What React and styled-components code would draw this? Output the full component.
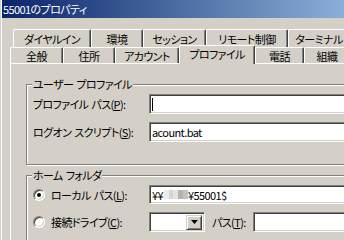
import React from "react";
import styled, { createGlobalStyle } from "styled-components";

const GlobalStyle = createGlobalStyle`
  html, body {
    margin: 0;
    padding: 0;
    background: #d4d0c8;
    overflow: hidden;
  }
  body {
    font-family: "Noto Sans CJK JP", "Liberation Sans", sans-serif;
    font-size: 11px;
    letter-spacing: -0.6px;
    font-feature-settings: "palt";
    color: #000;
  }
`;

const Window = styled.div`
  width: 420px;
  height: 240px;
  background: #d4d0c8;
  box-shadow: inset 1px 0 #d4d0c8, inset 2px 0 #fff;
  display: flex;
  flex-direction: column;
`;

const TitleBar = styled.div`
  height: 18px;
  margin-left: 2px;
  padding-left: 1px;
  display: flex;
  align-items: center;
  background: linear-gradient(90deg, #0a246a 0, #a6cef0 100%);
  color: #fff;
  line-height: 18px;
`;

const Body = styled.div`
  padding: 11px 0 0 10px;
  display: flex;
  flex-direction: column;
`;

const TabRow = styled.div`
  display: flex;
  align-items: flex-end;
  height: ${(p) => p.$h}px;
  padding-left: ${(p) => p.$indent}px;
`;

const Tab = styled.div`
  flex: none;
  box-sizing: border-box;
  width: ${(p) => p.$w}px;
  height: ${(p) => (p.$active ? p.$h + 3 : p.$h)}px;
  margin-bottom: ${(p) => (p.$active ? -1 : 0)}px;
  position: relative;
  z-index: ${(p) => (p.$active ? 2 : 1)};
  background: #d4d0c8;
  border-top: 1px solid #fff;
  border-left: 1px solid #fff;
  border-right: 1px solid #404040;
  box-shadow: inset -1px 0 #808080;
  border-radius: 2px 2px 0 0;
  display: flex;
  align-items: center;
  justify-content: center;
  padding-bottom: ${(p) => (p.$active ? 3 : 0)}px;
  line-height: 14px;
  white-space: nowrap;
`;

const Panel = styled.div`
  border-top: 1px solid #fff;
  border-left: 1px solid #fff;
  padding: 20px 0 0 15px;
  display: flex;
  flex-direction: column;
  gap: 10px;
`;

const GroupBox = styled.div`
  position: relative;
  border: 1px solid #808080;
  box-shadow: 1px 1px 0 #fff, inset 1px 1px 0 #fff;
  padding: ${(p) => p.$pad};
  display: flex;
  flex-direction: column;
  gap: ${(p) => p.$gap}px;
`;

const Legend = styled.span`
  position: absolute;
  top: -8px;
  left: 5px;
  padding: 0 1px;
  background: #d4d0c8;
  line-height: 14px;
  white-space: pre;
`;

const Row = styled.div`
  display: grid;
  grid-template-columns: 116px 1fr;
  align-items: center;
`;

const Label = styled.div`
  display: flex;
  align-items: center;
  gap: 6px;
  line-height: 14px;
  white-space: pre;
`;

const Field = styled.div`
  box-sizing: border-box;
  height: ${(p) => p.$h}px;
  width: ${(p) => (p.$w ? `${p.$w}px` : "auto")};
  background: #fff;
  border: 1px solid;
  border-color: #808080 #fff #fff #808080;
  box-shadow: inset 1px 1px #404040, inset -1px -1px #d4d0c8;
  padding-left: 2px;
  display: flex;
  align-items: center;
  line-height: 14px;
  white-space: nowrap;
`;

const Caret = styled.span`
  width: 1px;
  height: 13px;
  background: #000;
`;

const Mosaic = styled.span`
  display: inline-block;
  width: 24px;
  height: 9px;
  margin: 0 0 0 1px;
  background: linear-gradient(
    90deg,
    #ececec 0 5px,
    #d6d6d6 5px 9px,
    #e4e4e4 9px 14px,
    #b4b4b4 14px 19px,
    #c2c2c2 19px 24px
  );
`;

const Inline = styled.div`
  display: flex;
  align-items: center;
  gap: 7px;
`;

const Combo = styled(Field)`
  justify-content: flex-end;
  padding: 2px;
  flex: none;
`;

const DropButton = styled.span`
  box-sizing: border-box;
  width: 16px;
  height: 15px;
  background: #d4d0c8;
  border: 1px solid;
  border-color: #d4d0c8 #404040 #404040 #d4d0c8;
  box-shadow: inset 1px 1px #fff, inset -1px -1px #808080;
  display: flex;
  align-items: center;
  justify-content: center;
`;

const Radio = styled.span`
  box-sizing: border-box;
  width: 12px;
  height: 12px;
  border-radius: 50%;
  background: #fff;
  border: 1px solid;
  border-color: #808080 #fff #fff #808080;
  box-shadow: inset 1px 1px #404040, inset -1px -1px #d4d0c8;
  display: flex;
  align-items: center;
  justify-content: center;
  flex: none;

  &::after {
    content: "";
    width: 4px;
    height: 4px;
    border-radius: 50%;
    background: ${(p) => (p.$checked ? "#000" : "transparent")};
  }
`;

const backTabs = [
  ["ダイヤルイン", 78],
  ["環境", 52],
  ["セッション", 63],
  ["リモート制御", 82],
  ["ターミナル", 62],
];

const frontTabs = [
  ["全般", 53],
  ["住所", 52],
  ["アカウント", 64],
  ["プロファイル", 76, true],
  ["電話", 49],
  ["組織", 46],
];

export default function App() {
  return (
    <>
      <GlobalStyle />
      <Window>
        <TitleBar>55001のプロパティ</TitleBar>
        <Body>
          <TabRow $h={18} $indent={3}>
            {backTabs.map(([t, w]) => (
              <Tab key={t} $w={w} $h={18}>
                {t}
              </Tab>
            ))}
          </TabRow>
          <TabRow $h={16} $indent={0}>
            {frontTabs.map(([t, w, active]) => (
              <Tab key={t} $w={w} $h={16} $active={active}>
                {t}
              </Tab>
            ))}
          </TabRow>
          <Panel>
            <GroupBox $pad="9px 0 22px 6px" $gap={8}>
              <Legend>ユーザー{"\u2004"}プロファイル</Legend>
              <Row>
                <Label>
                  <span>
                    プロファイル{"\u2004"}パス(<u>P</u>):
                  </span>
                </Label>
                <Field $h={20}>
                  <Caret />
                </Field>
              </Row>
              <Row>
                <Label>
                  <span>
                    ログオン{"\u2004"}スクリプト(<u>S</u>):
                  </span>
                </Label>
                <Field $h={20}>acount.bat</Field>
              </Row>
            </GroupBox>
            <GroupBox $pad="9px 0 9px 6px" $gap={8}>
              <Legend>ホーム{"\u2004"}フォルダ</Legend>
              <Row>
                <Label>
                  <Radio $checked />
                  <span>
                    ローカル{"\u2004"}パス(<u>L</u>):
                  </span>
                </Label>
                <Field $h={19}>
                  ¥¥
                  <Mosaic />
                  ¥55001$
                </Field>
              </Row>
              <Row>
                <Label>
                  <Radio />
                  <span>
                    接続ドライブ(<u>C</u>):
                  </span>
                </Label>
                <Inline>
                  <Combo $h={20} $w={56}>
                    <DropButton>
                      <svg width="7" height="4" viewBox="0 0 7 4">
                        <path d="M0 0h7L3.5 4z" fill="#000" />
                      </svg>
                    </DropButton>
                  </Combo>
                  <span>
                    パス(<u>T</u>):
                  </span>
                  <Field $h={20} style={{ flex: 1 }} />
                </Inline>
              </Row>
            </GroupBox>
          </Panel>
        </Body>
      </Window>
    </>
  );
}
